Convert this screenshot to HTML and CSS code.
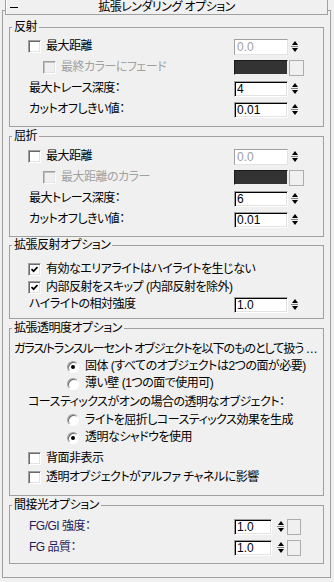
FILE: index.html
```html
<!DOCTYPE html>
<html lang="ja">
<head>
    <meta charset="UTF-8">
    <meta name="viewport" content="width=device-width, initial-scale=1.0">
    <title>拡張レンダリング オプション</title>
    <link rel="stylesheet" href="styles.css">
</head>
<body>
    <div class="rollout">
        <div class="rollout-title">
            <span class="collapse"></span>
            <span class="title-text">拡張レンダリング オプション</span>
            <span></span>
        </div>

        <fieldset class="group g-refl">
            <legend>反射</legend>
            <div class="row">
                <label class="lbl pl-cb"><span class="cb"></span>最大距離</label>
                <input class="num" type="text" value="0.0" disabled><span class="spin"></span>
            </div>
            <div class="row">
                <label class="lbl pl-sub dim"><span class="cb off"></span>最終カラーにフェード</label>
                <span class="swatch"></span><span class="btn"></span>
            </div>
            <div class="row">
                <label class="lbl pl-txt">最大トレース深度：</label>
                <input class="num" type="text" value="4"><span class="spin"></span>
            </div>
            <div class="row">
                <label class="lbl pl-txt">カットオフしきい値：</label>
                <input class="num" type="text" value="0.01"><span class="spin"></span>
            </div>
        </fieldset>

        <fieldset class="group g-refr">
            <legend>屈折</legend>
            <div class="row">
                <label class="lbl pl-cb"><span class="cb"></span>最大距離</label>
                <input class="num" type="text" value="0.0" disabled><span class="spin"></span>
            </div>
            <div class="row">
                <label class="lbl pl-sub dim"><span class="cb off"></span>最大距離のカラー</label>
                <span class="swatch"></span><span class="btn"></span>
            </div>
            <div class="row">
                <label class="lbl pl-txt">最大トレース深度：</label>
                <input class="num" type="text" value="6"><span class="spin"></span>
            </div>
            <div class="row">
                <label class="lbl pl-txt">カットオフしきい値：</label>
                <input class="num" type="text" value="0.01"><span class="spin"></span>
            </div>
        </fieldset>

        <fieldset class="group g-xrefl">
            <legend>拡張反射オプション</legend>
            <div class="row h18">
                <label class="lbl pl-cb"><span class="cb on"><svg width="7" height="7" viewBox="0 0 7 7"><polyline points="0.5,3 2.6,5.2 6.5,1" fill="none" stroke="#000" stroke-width="1.7"/></svg></span>有効なエリアライトはハイライトを生じない</label>
            </div>
            <div class="row h18">
                <label class="lbl pl-cb"><span class="cb on"><svg width="7" height="7" viewBox="0 0 7 7"><polyline points="0.5,3 2.6,5.2 6.5,1" fill="none" stroke="#000" stroke-width="1.7"/></svg></span>内部反射をスキップ (内部反射を除外)</label>
            </div>
            <div class="row h17">
                <label class="lbl pl-txt">ハイライトの相対強度</label>
                <input class="num" type="text" value="1.0"><span class="spin"></span>
            </div>
        </fieldset>

        <fieldset class="group g-xtrans">
            <legend>拡張透明度オプション</legend>
            <div class="row h17">
                <span class="lbl pl-head">ガラス/トランスルーセント オブジェクトを以下のものとして扱う …</span>
            </div>
            <div class="row h17">
                <label class="lbl pl-rb"><span class="rb on"></span>固体 (すべてのオブジェクトは2つの面が必要)</label>
            </div>
            <div class="row h17">
                <label class="lbl pl-rb"><span class="rb"></span>薄い壁 (1つの面で使用可)</label>
            </div>
            <div class="row h18 mt1">
                <span class="lbl pl-cb">コースティックスがオンの場合の透明なオブジェクト：</span>
            </div>
            <div class="row h18">
                <label class="lbl pl-rb"><span class="rb"></span>ライトを屈折しコースティックス効果を生成</label>
            </div>
            <div class="row h17">
                <label class="lbl pl-rb"><span class="rb on"></span>透明なシャドウを使用</label>
            </div>
            <div class="row h20 mt2">
                <label class="lbl pl-cb"><span class="cb"></span>背面非表示</label>
            </div>
            <div class="row h19">
                <label class="lbl pl-cb"><span class="cb"></span>透明オブジェクトがアルファ チャネルに影響</label>
            </div>
        </fieldset>

        <fieldset class="group g-indirect">
            <legend>間接光オプション</legend>
            <div class="row">
                <label class="lbl pl-txt fg">FG/GI 強度：</label>
                <input class="num short" type="text" value="1.0"><span class="spin wide"></span><span class="btn small"></span>
            </div>
            <div class="row">
                <label class="lbl pl-txt fg">FG 品質：</label>
                <input class="num short" type="text" value="1.0"><span class="spin wide"></span><span class="btn small"></span>
            </div>
        </fieldset>
    </div>
</body>
</html>
```

FILE: styles.css
```css
body {
    margin: 0;
    background: #f0f0f0;
    color: #000;
    font-family: "Liberation Sans", "Noto Sans CJK JP", sans-serif;
    font-size: 12px;
    line-height: 15px;
    letter-spacing: -0.5px;
    font-feature-settings: "palt";
}
.rollout {
    margin: 10px 3px 0 2px;
    padding-bottom: 13px;
    border: 1px solid #a0a0a0;
}
.rollout-title {
    display: grid;
    grid-template-columns: 1fr auto 1fr;
    align-items: center;
    height: 14px;
    margin: -11px 2px 0;
    border: 1px solid #a0a0a0;
    border-top: 0;
    background: #f0f0f0;
    box-shadow: inset 1px 0 #fff;
}
.collapse {
    width: 8px;
    height: 1px;
    margin-left: 4px;
    background: #000;
}
.title-text {
    white-space: nowrap;
}

/* group boxes */
.group {
    margin: 2px 6px 0;
    padding: 0;
    border: 1px solid #a0a0a0;
    min-width: 0;
}
.group legend {
    margin-left: 2px;
    padding: 0 2px;
    line-height: 15px;
    height: 15px;
}
.g-refl { margin-top: 5px; padding: 1px 0 6px; }
.g-refr { padding: 2px 0 6px; }
.g-xrefl { margin-top: 1px; padding: 7px 0 5px; }
.g-xtrans { padding: 5px 0 8px; }
.g-indirect { padding: 3px 0 5px; }

/* rows */
.row {
    display: flex;
    align-items: center;
    height: 21px;
}
.h17 { height: 17px; }
.h18 { height: 18px; }
.h19 { height: 19px; }
.h20 { height: 20px; }
.mt1 { margin-top: 1px; }
.mt2 { margin-top: 2px; }
.lbl {
    display: flex;
    align-items: center;
    gap: 5px;
    width: 224px;
    flex: none;
    box-sizing: border-box;
    white-space: nowrap;
}
.pl-head { padding-left: 4px; letter-spacing: -1px; }
.pl-cb { padding-left: 18px; }
.pl-txt { padding-left: 19px; }
.pl-sub { padding-left: 33px; }
.pl-rb { padding-left: 57px; }
.dim { color: #a0a0a0; }
.fg { color: #1c1c58; }

/* controls */
.num {
    box-sizing: border-box;
    width: 54px;
    height: 16px;
    margin: 0;
    padding: 0 2px;
    border: 1px solid;
    border-color: #a0a0a0 #fff #fff #a0a0a0;
    box-shadow: inset 1px 1px #000, inset -1px -1px #e3e3e3;
    background: #fff;
    color: #000;
    font: 12px "Liberation Sans", sans-serif;
    outline: none;
}
.num:disabled {
    color: #a0a0a0;
    border-color: #a0a0a0 #e3e3e3 #e3e3e3 #a0a0a0;
    box-shadow: none;
}
.num.short { width: 38px; }
.spin {
    display: flex;
    flex-direction: column;
    align-items: center;
    justify-content: center;
    gap: 1px;
    width: 9px;
    height: 14px;
    margin-left: 2px;
    background: linear-gradient(#808080, #808080) no-repeat center / 7px 1px;
}
.spin::before,
.spin::after {
    content: "";
    border-left: 3px solid transparent;
    border-right: 3px solid transparent;
}
.spin::before {
    border-bottom: 4px solid #000;
    margin-bottom: 1px;
}
.spin::after {
    border-top: 4px solid #000;
    margin-top: 1px;
}
.spin.wide { margin-left: 4px; }
.swatch {
    box-sizing: border-box;
    width: 54px;
    height: 15px;
    border: 1px solid;
    border-color: #1a1a1a #f0f0f0 #f0f0f0 #1a1a1a;
    background: #333;
}
.btn {
    box-sizing: border-box;
    width: 15px;
    height: 16px;
    margin-left: 1px;
    border: 1px solid #adadad;
    background: #f0f0f0;
}
.btn.small {
    width: 14px;
    margin-left: 2px;
}

/* check boxes and radio buttons */
.cb {
    display: flex;
    align-items: center;
    justify-content: center;
    box-sizing: border-box;
    width: 13px;
    height: 13px;
    flex: none;
    border: 1px solid;
    border-color: #a0a0a0 #fff #fff #a0a0a0;
    box-shadow: inset 1px 1px #696969, inset -1px -1px #e3e3e3;
    background: #fff;
}
.cb.off {
    background: #f0f0f0;
    box-shadow: inset 1px 1px #c0c0c0, inset -1px -1px #e3e3e3;
}
.rb {
    display: flex;
    align-items: center;
    justify-content: center;
    box-sizing: border-box;
    width: 12px;
    height: 12px;
    flex: none;
    border-radius: 50%;
    border: 1px solid;
    border-color: #a0a0a0 #fff #fff #a0a0a0;
    box-shadow: inset 1px 1px #696969;
    background: #fff;
    margin-right: 1px;
}
.rb.on::after {
    content: "";
    width: 4px;
    height: 4px;
    border-radius: 50%;
    background: #000;
}
```
